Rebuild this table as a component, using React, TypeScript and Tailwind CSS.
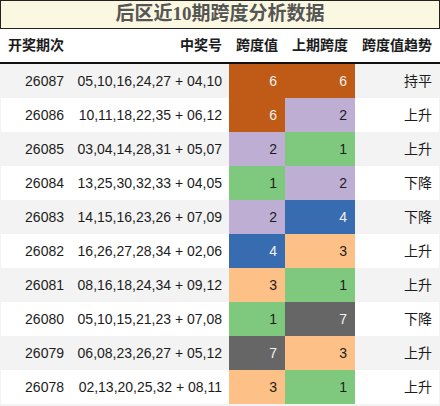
type Row = {
  issue: string;
  nums: string;
  span: number;
  prev: number;
  trend: string;
};

const rows: Row[] = [
  { issue: "26087", nums: "05,10,16,24,27 + 04,10", span: 6, prev: 6, trend: "持平" },
  { issue: "26086", nums: "10,11,18,22,35 + 06,12", span: 6, prev: 2, trend: "上升" },
  { issue: "26085", nums: "03,04,14,28,31 + 05,07", span: 2, prev: 1, trend: "上升" },
  { issue: "26084", nums: "13,25,30,32,33 + 04,05", span: 1, prev: 2, trend: "下降" },
  { issue: "26083", nums: "14,15,16,23,26 + 07,09", span: 2, prev: 4, trend: "下降" },
  { issue: "26082", nums: "16,26,27,28,34 + 02,06", span: 4, prev: 3, trend: "上升" },
  { issue: "26081", nums: "08,16,18,24,34 + 09,12", span: 3, prev: 1, trend: "上升" },
  { issue: "26080", nums: "05,10,15,21,23 + 07,08", span: 1, prev: 7, trend: "下降" },
  { issue: "26079", nums: "06,08,23,26,27 + 05,12", span: 7, prev: 3, trend: "上升" },
  { issue: "26078", nums: "02,13,20,25,32 + 08,11", span: 3, prev: 1, trend: "上升" },
];

// accent palette per span value
const spanColor: Record<number, string> = {
  1: "bg-[#7fc97f] text-[#1c1c1c]",
  2: "bg-[#beaed4] text-[#1c1c1c]",
  3: "bg-[#fdc086] text-[#1c1c1c]",
  4: "bg-[#386cb0] text-[#f2f2f2]",
  6: "bg-[#bf5b17] text-[#f2f2f2]",
  7: "bg-[#666666] text-[#f2f2f2]",
};

const cols = "grid grid-cols-[70px_159px_56px_70px_85px]";

export default function App() {
  return (
    <div
      className="w-[440px] h-[406px] bg-[#f3f3f3] text-[14px] text-[#1c1c1c]"
      style={{ fontFamily: '"Liberation Sans", "Noto Sans CJK SC", sans-serif' }}
    >
      <div
        className="h-[29px] border border-[#222] bg-[#fbf8e1] flex items-center justify-center text-[19px] font-bold text-[#555]"
        style={{ fontFamily: '"Liberation Serif", "Noto Sans CJK SC", serif' }}
      >
        后区近10期跨度分析数据
      </div>
      <div className={`${cols} h-[35px] bg-white border-b-2 border-[#111] font-bold items-center`}>
        <div className="text-right pr-[6px]">开奖期次</div>
        <div className="text-right pr-[7px]">中奖号</div>
        <div className="text-right pr-[7px]">跨度值</div>
        <div className="text-right pr-[7px]">上期跨度</div>
        <div className="text-right pr-[8px]">跨度值趋势</div>
      </div>
      {rows.map((r, i) => (
        <div
          key={r.issue}
          className={`${cols} h-[34px] ${
            i % 2 === 0
              ? "bg-[#f3f3f3]"
              : "bg-white shadow-[inset_1px_0_0_#f3f3f3,inset_-1px_0_0_#f3f3f3]"
          }`}
        >
          <div className="flex items-center justify-end pr-[6px]">{r.issue}</div>
          <div className="flex items-center justify-end pr-[7px]">{r.nums}</div>
          <div className={`flex items-center justify-end pr-[8px] ${spanColor[r.span]}`}>{r.span}</div>
          <div className={`flex items-center justify-end pr-[8px] ${spanColor[r.prev]}`}>{r.prev}</div>
          <div className="flex items-center justify-end pr-[8px]">{r.trend}</div>
        </div>
      ))}
    </div>
  );
}
